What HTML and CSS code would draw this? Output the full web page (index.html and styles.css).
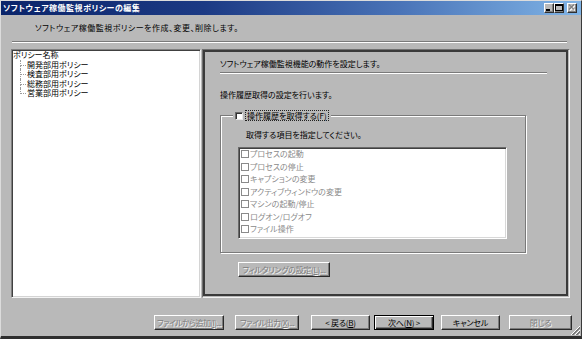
FILE: index.html
```html
<!DOCTYPE html>
<html lang="ja">
<head>
<meta charset="utf-8">
<title>ソフトウェア稼働監視ポリシーの編集</title>
<link rel="stylesheet" href="styles.css">
</head>
<body>
<div class="window">
  <div class="titlebar">
    <span class="title">ソフトウェア稼働監視ポリシーの編集</span>
    <div class="tb-buttons">
      <span class="tb-btn"><svg width="8" height="7" viewBox="0 0 8 7"><rect x="1" y="5" width="4" height="2" fill="#000"/></svg></span>
      <span class="tb-btn"><svg width="8" height="7" viewBox="0 0 8 7"><rect x="0.5" y="0.5" width="7" height="6" fill="none" stroke="#000"/><rect x="0" y="0" width="8" height="2" fill="#000"/></svg></span>
      <span class="tb-btn tb-close"><svg width="8" height="7" viewBox="0 0 8 7"><path d="M2 1.5 L7 6.5 M7 1.5 L2 6.5" stroke="#fff" stroke-width="1.2"/><path d="M1 0.5 L6 5.5 M6 0.5 L1 5.5" stroke="#808080" stroke-width="1.2"/></svg></span>
    </div>
  </div>
  <div class="header">ソフトウェア稼働監視ポリシーを作成、変更、削除します。</div>
  <div class="sep"></div>
  <div class="main">
    <div class="tree">
      <div class="tree-root">ポリシー名称</div>
      <ul class="tree-children">
        <li>開発部用ポリシー</li>
        <li>検査部用ポリシー</li>
        <li>総務部用ポリシー</li>
        <li>営業部用ポリシー</li>
      </ul>
    </div>
    <div class="panel">
      <div class="panel-in">
        <div class="p-title">ソフトウェア稼働監視機能の動作を設定します。</div>
        <div class="p-sep"></div>
        <div class="p-desc">操作履歴取得の設定を行います。</div>
        <div class="group">
          <div class="legend"><span class="chk"></span><span class="focus">操作履歴を取得する(F)</span></div>
          <div class="g-label">取得する項目を指定してください。</div>
          <div class="list">
            <div class="item"><span class="ichk"></span>プロセスの起動</div>
            <div class="item"><span class="ichk"></span>プロセスの停止</div>
            <div class="item"><span class="ichk"></span>キャプションの変更</div>
            <div class="item"><span class="ichk"></span>アクティブウィンドウの変更</div>
            <div class="item"><span class="ichk"></span>マシンの起動/停止</div>
            <div class="item"><span class="ichk"></span>ログオン/ログオフ</div>
            <div class="item"><span class="ichk"></span>ファイル操作</div>
          </div>
        </div>
        <div class="btn dis filter">フィルタリングの設定(<u>L</u>)...</div>
      </div>
    </div>
  </div>
  <div class="buttons">
    <div class="btn dis b1">ファイルから追加(<u>I</u>)...</div>
    <div class="btn dis b2">ファイル出力(<u>X</u>)...</div>
    <div class="btn b3">&lt; 戻る(<u>B</u>)</div>
    <div class="btn def b4">次へ(<u>N</u>) &gt;</div>
    <div class="btn b5">キャンセル</div>
    <div class="btn dis b6">閉じる</div>
  </div>
  <svg class="grip" width="11" height="11" viewBox="0 0 11 11">
    <path d="M10 1 L1 10 M10 5 L5 10 M10 9 L9 10" stroke="#fff" stroke-width="1"/>
    <path d="M10 2 L2 10 M10 3 L3 10 M10 6 L6 10 M10 7 L7 10" stroke="#7a7a7a" stroke-width="1"/>
  </svg>
</div>
</body>
</html>
```
FILE: styles.css
```css
* { box-sizing: border-box; }
body {
  margin: 0;
  background: #b9b9b9;
  font-family: "Noto Sans CJK JP", sans-serif;
  font-size: 8px;
  line-height: 10px;
  color: #000;
  font-feature-settings: "palt";
}
.window {
  width: 582px;
  height: 339px;
  display: flex;
  flex-direction: column;
  background: #b9b9b9;
  border-top: 1px solid #dcdcdc;
  border-left: 1px solid #dcdcdc;
  border-right: 1px solid #3a3a3a;
  border-bottom: 3px solid #2e2e2e;
  position: relative;
  overflow: hidden;
}
.titlebar {
  height: 14px;
  flex: none;
  display: flex;
  align-items: center;
  justify-content: space-between;
  background: linear-gradient(to right, #0a246a 0%, #1c3a84 35%, #4a74b8 69%, #80b4e6 100%);
  padding: 0 4px 0 2px;
}
.title { color: #fff; font-weight: bold; letter-spacing: 0.5px; }
.tb-buttons { display: flex; align-items: center; }
.tb-btn {
  width: 10px;
  height: 10px;
  background: #b9b9b9;
  border: 1px solid;
  border-color: #fff #303030 #303030 #fff;
  box-shadow: inset -1px -1px #808080;
  display: flex;
  align-items: flex-start;
  justify-content: flex-start;
}
.tb-close { margin-left: 3px; }
.header { margin: 8px 0 0 34px; height: 10px; flex: none; letter-spacing: 0.5px; }
.sep {
  margin: 8px 14px 0 11px;
  height: 2px;
  flex: none;
  border-top: 1px solid #7a7a7a;
  border-bottom: 1px solid #fff;
}
.main {
  margin: 6px 0 0 10px;
  width: 559px;
  height: 249px;
  flex: none;
  display: flex;
  gap: 1px;
}
.tree {
  width: 190px;
  background: #fff;
  border: 1px solid;
  border-color: #808080 #f4f4f4 #f4f4f4 #808080;
  box-shadow: inset 1px 1px #404040, inset -1px -1px #d4d4d4;
  padding: 0 1px;
  line-height: 9.5px;
}
.tree-root { height: 9.5px; }
.tree-children { list-style: none; margin: 0; padding: 0; }
.tree-children li { position: relative; height: 9.5px; padding-left: 14px; }
.tree-children li::before {
  content: "";
  position: absolute;
  left: 7px;
  top: 0;
  width: 5px;
  height: 5px;
  border-left: 1px dotted #9a9a9a;
  border-bottom: 1px dotted #9a9a9a;
}
.tree-children li:not(:last-child)::after {
  content: "";
  position: absolute;
  left: 7px;
  top: 5px;
  bottom: 0;
  border-left: 1px dotted #9a9a9a;
}
.panel {
  flex: 1;
  border: 1px solid;
  border-color: #707070 #f2f2f2 #f2f2f2 #707070;
  padding: 0 1px 1px 0;
  display: flex;
}
.panel-in {
  flex: 1;
  border: 2px solid #3a3a3a;
  padding: 7px 0 0 15px;
  display: flex;
  flex-direction: column;
  align-items: flex-start;
}
.p-title { height: 10px; }
.p-sep {
  width: 327px;
  margin-top: 3px;
  height: 2px;
  border-top: 1px solid #7a7a7a;
  border-bottom: 1px solid #fff;
}
.p-desc { margin-top: 16px; height: 10px; }
.group {
  margin-top: 15px;
  width: 306px;
  height: 138px;
  border: 1px solid #7a7a7a;
  box-shadow: inset 1px 1px 0 #fff, 1px 1px 0 #fff;
  display: flex;
  flex-direction: column;
  align-items: flex-start;
}
.legend {
  margin: -6px 0 0 12px;
  padding: 0 2px;
  height: 11px;
  background: #b9b9b9;
  display: flex;
  align-items: center;
}
.chk {
  width: 8px;
  height: 8px;
  background: #fff;
  border: 1px solid;
  border-color: #6a6a6a #e8e8e8 #e8e8e8 #6a6a6a;
  box-shadow: inset 1px 1px #303030;
}
.focus {
  margin-left: 2px;
  padding: 0 1px;
  height: 11px;
  border: 1px dotted #222;
  line-height: 9px;
}
.g-label { margin: 9px 0 0 25px; height: 10px; }
.list {
  margin: 7px 0 0 17px;
  width: 269px;
  height: 92px;
  background: #fff;
  border: 1px solid;
  border-color: #6a6a6a #fff #fff #6a6a6a;
  box-shadow: inset 1px 1px #404040, inset -1px -1px #d8d8d8;
  padding: 0 2px;
  color: #8a8a8a;
  line-height: 12.5px;
}
.item { display: flex; align-items: center; height: 12.5px; }
.ichk {
  width: 8px;
  height: 8px;
  border: 1px solid #8a8a8a;
  background: #fff;
  margin-right: 1px;
  flex: none;
}
.btn {
  height: 15px;
  flex: none;
  background: #b9b9b9;
  border: 1px solid;
  border-color: #fff #2a2a2a #2a2a2a #fff;
  box-shadow: inset -1px -1px #7a7a7a;
  display: flex;
  align-items: center;
  justify-content: center;
  white-space: nowrap;
  color: #000;
  letter-spacing: -0.2px;
  overflow: hidden;
}
.btn.dis { color: #7e7e7e; text-shadow: 1px 1px 0 #f4f4f4; }
.btn.def {
  border-color: #000;
  box-shadow: inset 1px 1px #fff, inset -1px -1px #2a2a2a, inset -2px -2px #7a7a7a;
}
.filter { margin: 9px 0 0 18px; width: 92px; letter-spacing: -0.3px; }
.buttons {
  margin-top: 17px;
  height: 15px;
  flex: none;
  display: flex;
  padding-left: 153px;
}
.b1 { width: 70px; letter-spacing: -0.6px; }
.b2 { width: 64px; margin-left: 11px; letter-spacing: -0.5px; }
.b3 { width: 59px; margin-left: 12px; }
.b4 { width: 60px; margin-left: 4px; }
.b5 { width: 59px; margin-left: 7px; }
.b6 { width: 63px; margin-left: 9px; }
.grip { position: absolute; right: 0; bottom: 0; }
```
